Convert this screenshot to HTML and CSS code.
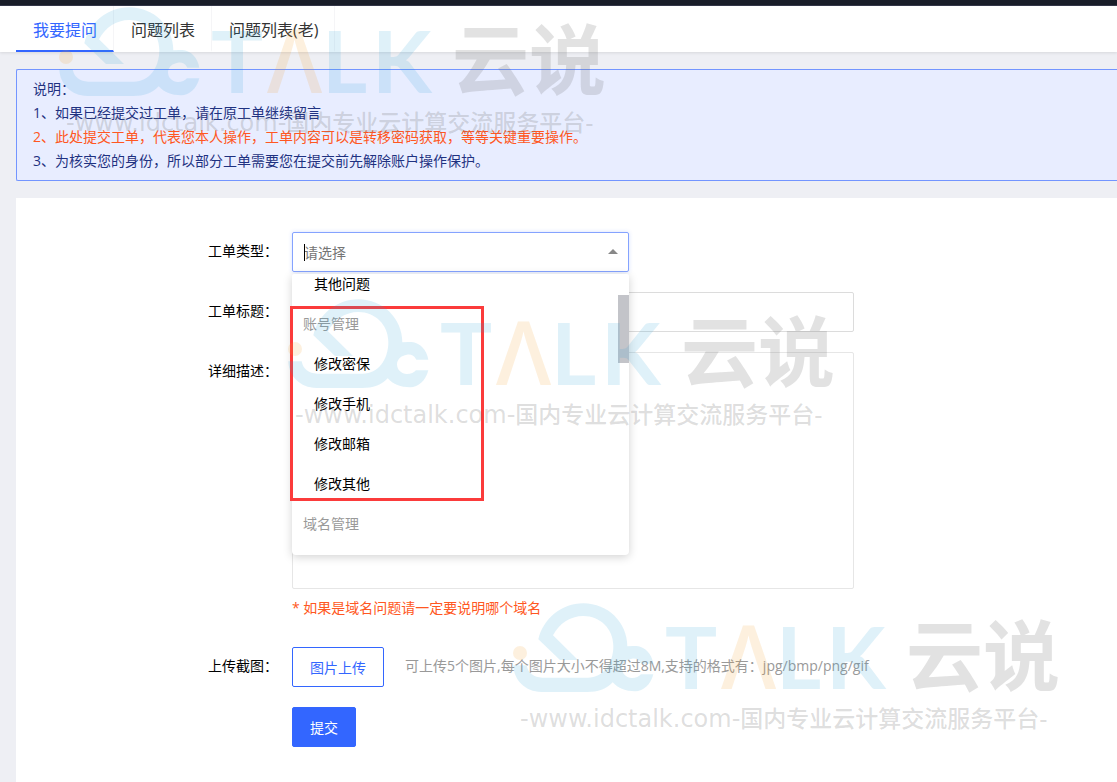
FILE: index.html
```html
<!DOCTYPE html>
<html lang="zh-CN">
<head>
<meta charset="utf-8">
<title>我要提问</title>
<link rel="stylesheet" href="styles.css">
</head>
<body>
<svg class="defs" aria-hidden="true">
  <symbol id="brand" viewBox="0 0 545 140" overflow="visible">
    <g class="brand-blue" transform="translate(-59 -4) scale(.33333)">
      <path d="M253 130C268 68 322 22 388 22C462 22 520 80 520 151Q533 149 547 150C573 152 594 174 598 203H562C556 190 545 186 534 188C516 190 504 203 504 217C504 233 517 246 534 246C546 246 555 242 561 235H598C590 266 569 286 543 286C516 286 492 277 476 259C456 280 432 288 400 288H262C214 288 179 252 178 208H218C222 231 240 245 265 245H402C446 245 478 205 478 150C478 98 438 60 388 60C349 60 315 83 297 118L372 192H318Z"/>
    </g>
    <circle class="brand-orange" cx="7" cy="53" r="7"/>
    <text class="brand-word brand-blue" x="152" y="89">T</text>
    <text class="brand-word brand-peak brand-orange" x="208" y="89">Λ</text>
    <text class="brand-word brand-blue" x="263" y="89">L</text>
    <text class="brand-word brand-blue" x="313" y="89">K</text>
    <text class="brand-name" x="393" y="85">云说</text>
    <text class="brand-url" x="7" y="127">-www.idctalk.com-<tspan class="brand-slogan">国内专业云计算交流服务平台-</tspan></text>
  </symbol>
</svg>
<div class="topbar"></div>
<nav class="tabs">
  <a class="tab tab-active" href="#ask">我要提问</a>
  <a class="tab" href="#list">问题列表</a>
  <a class="tab" href="#old">问题列表(老)</a>
</nav>
<main class="content">
  <section class="notice">
    <p>说明：</p>
    <p>1、如果已经提交过工单，请在原工单继续留言</p>
    <p class="warn">2、此处提交工单，代表您本人操作，工单内容可以是转移密码获取，等等关键重要操作。</p>
    <p>3、为核实您的身份，所以部分工单需要您在提交前先解除账户操作保护。</p>
  </section>
  <form class="panel">
    <div class="row">
      <label class="label" for="type">工单类型：</label>
      <div class="select">
        <input class="field" id="type" type="text" role="combobox" aria-expanded="true" aria-controls="types" placeholder="请选择">
        <span class="caret"></span>
        <svg class="arrow" viewBox="0 0 10 5" aria-hidden="true"><path d="M0 5L5 0L10 5Z"/></svg>
        <div class="menu">
          <ul class="options" id="types" role="listbox">
            <li class="option option-cut" role="option">其他问题</li>
            <li class="group">账号管理</li>
            <li class="option" role="option">修改密保</li>
            <li class="option" role="option">修改手机</li>
            <li class="option" role="option">修改邮箱</li>
            <li class="option" role="option">修改其他</li>
            <li class="group">域名管理</li>
          </ul>
          <span class="thumb"></span>
          <span class="highlight"></span>
        </div>
      </div>
    </div>
    <div class="row">
      <label class="label" for="title">工单标题：</label>
      <input class="field field-wide" id="title" type="text">
    </div>
    <div class="row">
      <label class="label" for="detail">详细描述：</label>
      <div class="detail">
        <textarea class="field field-area" id="detail"></textarea>
        <p class="hint">* 如果是域名问题请一定要说明哪个域名</p>
      </div>
    </div>
    <div class="row">
      <label class="label" for="upload">上传截图：</label>
      <button class="button button-line" id="upload" type="button">图片上传</button>
      <span class="note">可上传5个图片,每个图片大小不得超过8M,支持的格式有：jpg/bmp/png/gif</span>
    </div>
    <div class="row">
      <span class="label"></span>
      <button class="button" type="submit">提交</button>
    </div>
  </form>
</main>
<svg class="mark mark-top" aria-hidden="true"><use href="#brand"/></svg>
<svg class="mark mark-middle" aria-hidden="true"><use href="#brand"/></svg>
<svg class="mark mark-bottom" aria-hidden="true"><use href="#brand"/></svg>
</body>
</html>
```
FILE: styles.css
```css
* { box-sizing: border-box; }
body {
  position: relative;
  display: flex;
  flex-direction: column;
  min-height: 100vh;
  margin: 0;
  overflow-x: hidden;
  background: #eeeff4;
  color: #000;
  font: 14px/24px "Open Sans", "Noto Sans CJK SC", sans-serif;
}
p, ul { margin: 0; padding: 0; list-style: none; }
input, textarea, button { font: inherit; }
.defs { position: absolute; width: 0; height: 0; }

.topbar { height: 6px; background: #191d29; border-bottom: 1px solid #34374a; }
.tabs {
  display: flex;
  height: 46px;
  padding-left: 16px;
  background: #fff;
  box-shadow: 0 1px 3px rgba(0, 0, 0, .1);
}
.tab {
  padding: 0 16px 0 17px;
  border-right: 1px solid #f5f5f7;
  border-bottom: 2px solid transparent;
  color: #333;
  font-size: 16px;
  line-height: 48px;
  text-decoration: none;
}
.tab-active { border-bottom-color: #36f; color: #36f; }

.content {
  display: flex;
  flex: 1;
  flex-direction: column;
  gap: 17px;
  padding: 17px 0 0 16px;
}
.notice {
  padding: 7px 16px;
  border: 1px solid #7395ff;
  border-right: 0;
  border-radius: 2px 0 0 2px;
  background: #e8edff;
  color: #1f3281;
}
.warn, .hint { color: #ff5722; }

.panel {
  display: flex;
  flex: 1;
  flex-direction: column;
  gap: 20px;
  padding: 34px 0;
  background: #fff;
}
.row { display: flex; }
.label { width: 262px; margin-right: 14px; line-height: 38px; text-align: right; }
.field {
  display: block;
  width: 100%;
  height: 40px;
  padding: 0 11px;
  border: 1px solid #dcdcdc;
  border-radius: 2px;
  outline: 0;
  background: #fff;
}
.field::placeholder { color: #757575; }
.field-wide { width: 562px; }
.field-area { height: 237px; border-color: #e6e6e6; resize: none; }
.select { position: relative; width: 337px; }
.select .field { border-color: #85a3ff; box-shadow: 0 0 4px rgba(51, 102, 255, .2); }
.caret { position: absolute; top: 12px; left: 12px; width: 1px; height: 17px; background: #000; }
.arrow { position: absolute; top: 17px; right: 11px; width: 10px; height: 5px; fill: #888; }
.menu {
  position: absolute;
  z-index: 1;
  top: 42px;
  left: 0;
  width: 100%;
  padding-bottom: 11px;
  border-radius: 2px 2px 4px 4px;
  background: #fff;
  box-shadow: 0 2px 10px rgba(0, 0, 0, .18);
}
.group, .option { line-height: 40px; }
.group { padding-left: 11px; color: #999; }
.option { padding-left: 22px; }
.option-cut { height: 30px; line-height: 20px; }
.thumb { position: absolute; top: 21px; right: 0; width: 11px; height: 68px; background: #c3c4c9; }
.highlight {
  position: absolute;
  top: 32px;
  left: -2px;
  width: 194px;
  height: 195px;
  border: 3px solid #fb3b3b;
}
.detail { width: 562px; margin-bottom: 7px; }
.hint { padding-top: 7px; }
.button {
  height: 40px;
  padding: 2px 17px 0;
  border: 1px solid #36f;
  border-radius: 2px;
  background: #36f;
  color: #fff;
}
.button-line { background: #fff; color: #36f; }
.note { margin-left: 21px; color: #999; line-height: 38px; }

.mark { position: absolute; z-index: 2; width: 545px; height: 140px; overflow: visible; pointer-events: none; }
.mark-top { top: 4px; left: 59px; }
.mark-middle { top: 296px; left: 288px; }
.mark-bottom { top: 600px; left: 513px; }
.brand-blue { fill: rgba(41, 162, 215, .15); }
.brand-orange { fill: rgba(242, 155, 35, .15); }
.brand-word { font: 700 87px Lato, sans-serif; }
.brand-peak { font: 600 88px "Open Sans", sans-serif; }
.brand-name { fill: rgba(110, 110, 110, .2); font: 700 77px "Noto Sans CJK SC", sans-serif; }
.brand-url { fill: rgba(110, 110, 110, .23); font: 24px "DejaVu Sans", sans-serif; }
.brand-slogan { font: 500 23px "Noto Sans CJK SC", sans-serif; }
```
